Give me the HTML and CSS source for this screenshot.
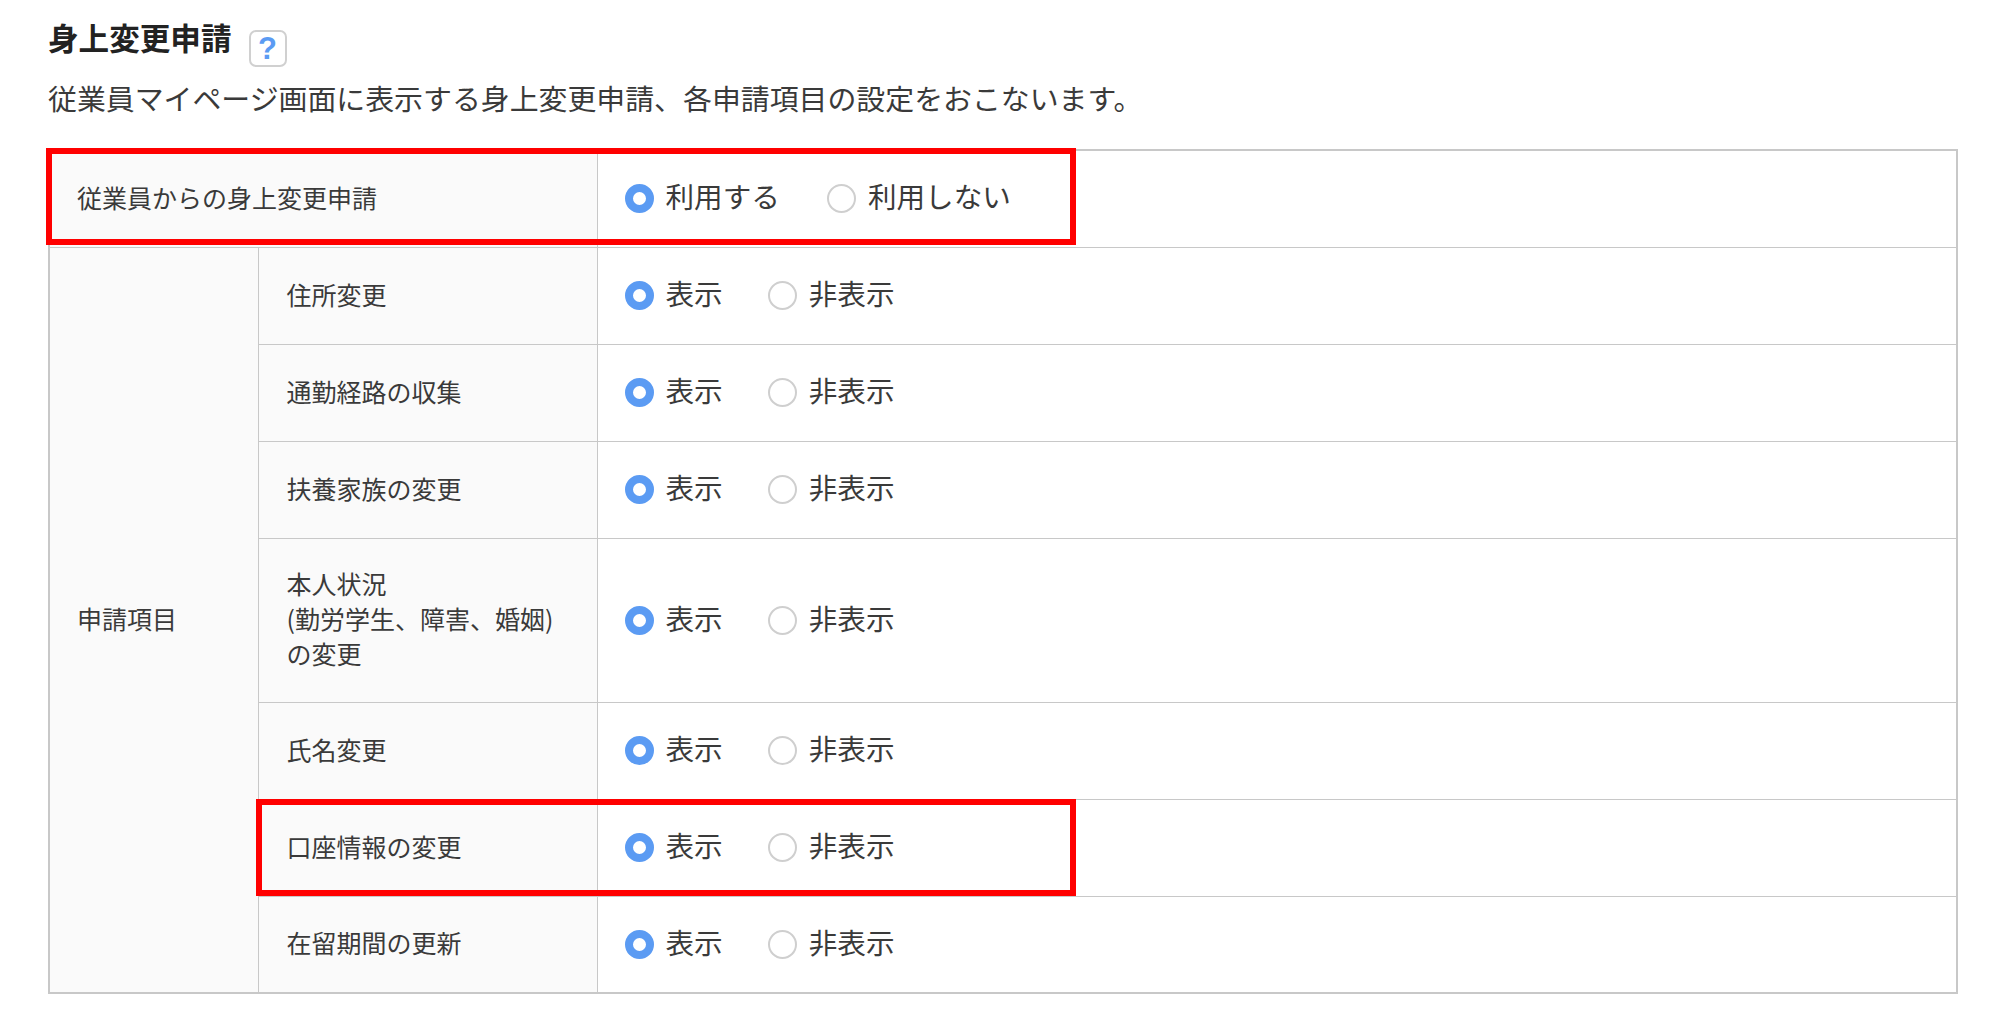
FILE: index.html
```html
<!DOCTYPE html>
<html lang="ja">
<head>
<meta charset="utf-8">
<title>身上変更申請</title>
<link rel="stylesheet" href="styles.css">
</head>
<body>
<main class="page">
  <header class="head">
    <h1 class="title">身上変更申請</h1>
    <span class="help">?</span>
  </header>
  <p class="lead">従業員マイページ画面に表示する身上変更申請、各申請項目の設定をおこないます。</p>
  <div class="table-wrap">
    <table class="settings">
      <colgroup><col class="c1"><col class="c2"><col></colgroup>
      <tr class="row-first">
        <th colspan="2" class="label">従業員からの身上変更申請</th>
        <td class="val"><span class="opts opts-wide"><label class="opt"><i class="radio on"></i>利用する</label><label class="opt"><i class="radio"></i>利用しない</label></span></td>
      </tr>
      <tr class="row">
        <th rowspan="7" class="label">申請項目</th>
        <th class="label sub">住所変更</th>
        <td class="val"><span class="opts"><label class="opt"><i class="radio on"></i>表示</label><label class="opt"><i class="radio"></i>非表示</label></span></td>
      </tr>
      <tr class="row">
        <th class="label sub">通勤経路の収集</th>
        <td class="val"><span class="opts"><label class="opt"><i class="radio on"></i>表示</label><label class="opt"><i class="radio"></i>非表示</label></span></td>
      </tr>
      <tr class="row">
        <th class="label sub">扶養家族の変更</th>
        <td class="val"><span class="opts"><label class="opt"><i class="radio on"></i>表示</label><label class="opt"><i class="radio"></i>非表示</label></span></td>
      </tr>
      <tr class="row-tall">
        <th class="label sub">本人状況<br>(勤労学生、障害、婚姻)<br>の変更</th>
        <td class="val"><span class="opts"><label class="opt"><i class="radio on"></i>表示</label><label class="opt"><i class="radio"></i>非表示</label></span></td>
      </tr>
      <tr class="row">
        <th class="label sub">氏名変更</th>
        <td class="val"><span class="opts"><label class="opt"><i class="radio on"></i>表示</label><label class="opt"><i class="radio"></i>非表示</label></span></td>
      </tr>
      <tr class="row">
        <th class="label sub">口座情報の変更</th>
        <td class="val"><span class="opts"><label class="opt"><i class="radio on"></i>表示</label><label class="opt"><i class="radio"></i>非表示</label></span></td>
      </tr>
      <tr class="row">
        <th class="label sub">在留期間の更新</th>
        <td class="val"><span class="opts"><label class="opt"><i class="radio on"></i>表示</label><label class="opt"><i class="radio"></i>非表示</label></span></td>
      </tr>
    </table>
    <div class="mark mark-top"></div>
    <div class="mark mark-bank"></div>
  </div>
</main>
</body>
</html>
```
FILE: styles.css
```css
* { box-sizing: border-box; }
html, body { margin: 0; background: #fff; }
body {
  font-family: "Noto Sans CJK JP", "Noto Sans", sans-serif;
  color: #3a3a3a;
}
.page { padding: 17px 42px 0 48px; }
.head { display: flex; align-items: flex-start; gap: 17px; height: 50px; }
.title {
  margin: 0;
  font-size: 30.6px;
  line-height: 40px;
  font-weight: 700;
  color: #222;
}
.help {
  margin-top: 13px;
  width: 38px;
  height: 37px;
  border: 2px solid #d0d0d0;
  border-radius: 7px;
  display: flex;
  align-items: center;
  justify-content: center;
  font-family: "Liberation Sans", sans-serif;
  font-size: 31px;
  font-weight: 700;
  color: #5b9bf3;
}
.lead {
  margin: 10px 0 0;
  font-size: 28.9px;
  line-height: 40px;
  height: 72px;
}
.table-wrap { position: relative; }
.settings {
  width: 100%;
  table-layout: fixed;
  border-collapse: collapse;
  border: 2px solid #c8c8c8;
}
.c1 { width: 209px; }
.c2 { width: 339px; }
.row-first { height: 97px; }
.row { height: 97px; }
.row-tall { height: 164px; }
.settings th, .settings td { border: 1px solid #c8c8c8; padding: 0 27px 3px; }
.settings th.sub { padding-left: 28px; }
.label {
  background: #fafafa;
  text-align: left;
  font-weight: 400;
  font-size: 25px;
  line-height: 35px;
}
.val { background: #fff; }
.settings td.val { padding-bottom: 5px; }
.opts { display: flex; gap: 45px; font-size: 28.6px; line-height: 40px; }
.opts-wide { gap: 47px; }
.opt { display: flex; align-items: center; gap: 12px; }
.radio {
  width: 29px;
  height: 29px;
  margin-top: 5px;
  border-radius: 50%;
  border: 2px solid #cfcfcf;
  background: #fff;
  flex: none;
}
.radio.on { border: 8px solid #5b9bf3; }
.mark {
  position: absolute;
  border: 6px solid #f00;
  pointer-events: none;
}
.mark-top { left: -2px; top: -1px; width: 1030px; height: 97px; }
.mark-bank { left: 208px; top: 650px; width: 820px; height: 97px; }
```
